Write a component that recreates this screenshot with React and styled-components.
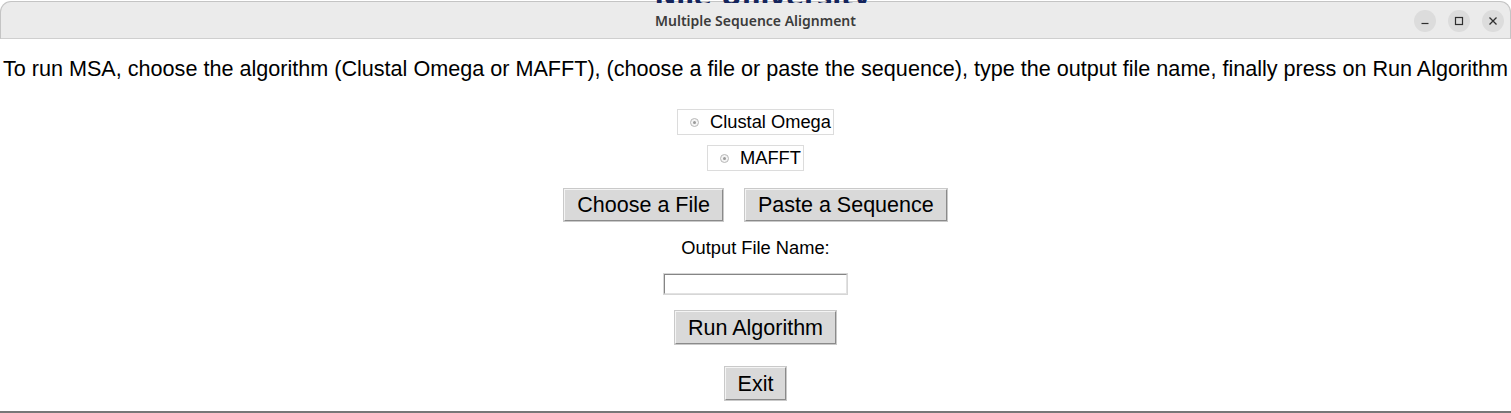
import React from "react";
import styled, { createGlobalStyle } from "styled-components";

const GlobalStyle = createGlobalStyle`
  html, body { margin: 0; padding: 0; background: #ffffff; }
  body { font-family: "Liberation Sans", Arial, sans-serif; }
  * { box-sizing: border-box; }
`;

const Screen = styled.div`
  position: relative;
  width: 1511px;
  height: 413px;
  overflow: hidden;
  background: #ffffff;
`;

const BehindText = styled.div`
  position: absolute;
  top: 0;
  left: 0;
  right: 0;
  height: 3px;
  overflow: hidden;
  display: flex;
  justify-content: center;
  align-items: flex-end;
  z-index: 2;
  pointer-events: none;
`;

const BehindLabel = styled.span`
  font-family: "DejaVu Sans", sans-serif;
  font-weight: 700;
  font-size: 26px;
  line-height: 26px;
  color: #14245c;
  margin-left: 14px;
  transform: translateY(7px);
  white-space: nowrap;
`;

const Window = styled.div`
  display: flex;
  flex-direction: column;
  width: 1511px;
  height: 413px;
  padding-top: 1px;
`;

const TitleBar = styled.div`
  display: grid;
  grid-template-columns: 1fr auto 1fr;
  align-items: center;
  height: 38px;
  background: #ebebeb;
  border: 1px solid #c4c4c4;
  border-bottom-color: #cfcfcf;
  border-radius: 11px 11px 0 0;
`;

const Title = styled.div`
  grid-column: 2;
  font-family: "Noto Sans", "DejaVu Sans", sans-serif;
  font-weight: 600;
  font-size: 14px;
  color: #3b3b3b;
`;

const Controls = styled.div`
  grid-column: 3;
  justify-self: end;
  display: flex;
  gap: 12px;
  padding-right: 6px;
  margin-top: 2px;
`;

const CtrlButton = styled.div`
  width: 22px;
  height: 22px;
  border-radius: 50%;
  background: #dcdcdc;
  display: flex;
  align-items: center;
  justify-content: center;
`;

const Content = styled.div`
  flex: 1;
  display: flex;
  flex-direction: column;
  align-items: center;
  border-bottom: 2px solid #777777;
  background: #ffffff;
`;

const Instructions = styled.div`
  margin-top: 18px;
  font-size: 21.6px;
  line-height: 24px;
  color: #000;
  white-space: nowrap;
`;

const RadioBox = styled.label`
  display: flex;
  align-items: center;
  height: 26px;
  margin-top: ${(p) => p.$mt}px;
  padding: 0 2px 0 ${(p) => p.$pl}px;
  border: 1px solid #dcdcdc;
  font-size: 18.3px;
  color: #000;
`;

const RadioDot = styled.span`
  width: 9px;
  height: 9px;
  border-radius: 50%;
  border: 1px solid #b8b8b8;
  background: #f4f4f4;
  display: flex;
  align-items: center;
  justify-content: center;
  margin-right: 11px;
  &::after {
    content: "";
    width: 3px;
    height: 3px;
    border-radius: 50%;
    background: #9a9a9a;
  }
`;

const ButtonRow = styled.div`
  display: flex;
  gap: 22px;
  margin-top: 18px;
`;

const TkButton = styled.button`
  height: ${(p) => p.$h || 32}px;
  padding: 0 12px;
  margin: ${(p) => p.$mt || 0}px 0 0;
  background: #d9d9d9;
  border: 1px solid;
  border-color: #f4f4f4 #8a8a8a #8a8a8a #f4f4f4;
  box-shadow: 0 0 0 1px #c9c9c9;
  font-family: "Liberation Sans", Arial, sans-serif;
  font-size: 21.5px;
  line-height: 24px;
  color: #000;
  cursor: pointer;
`;

const FieldLabel = styled.div`
  margin-top: 16px;
  font-size: 18.3px;
  line-height: 22px;
  color: #000;
`;

const Entry = styled.input`
  width: 183px;
  height: 20px;
  margin-top: 15px;
  border: 1px solid;
  border-color: #858585 #e2e2e2 #e2e2e2 #858585;
  box-shadow: 0 0 0 1px #d6d6d6;
  background: #fff;
  outline: none;
`;

export default function App() {
  return (
    <Screen>
      <GlobalStyle />
      <BehindText>
        <BehindLabel>Nile University</BehindLabel>
      </BehindText>
      <Window>
        <TitleBar>
          <Title>Multiple Sequence Alignment</Title>
          <Controls>
            <CtrlButton>
              <svg width="10" height="10" viewBox="0 0 10 10">
                <line x1="1.5" y1="7.5" x2="8.5" y2="7.5" stroke="#2e2e2e" strokeWidth="1.2" />
              </svg>
            </CtrlButton>
            <CtrlButton>
              <svg width="10" height="10" viewBox="0 0 10 10">
                <rect x="1.5" y="1.5" width="7" height="7" fill="none" stroke="#2e2e2e" strokeWidth="1.2" />
              </svg>
            </CtrlButton>
            <CtrlButton>
              <svg width="10" height="10" viewBox="0 0 10 10">
                <path d="M1.5 1.5 L8.5 8.5 M8.5 1.5 L1.5 8.5" stroke="#2e2e2e" strokeWidth="1.3" />
              </svg>
            </CtrlButton>
          </Controls>
        </TitleBar>
        <Content>
          <Instructions>
            To run MSA, choose the algorithm (Clustal Omega or MAFFT), (choose a file or paste the sequence), type the output file name, finally press on Run Algorithm
          </Instructions>
          <RadioBox $mt={28} $pl={12}>
            <RadioDot />
            Clustal Omega
          </RadioBox>
          <RadioBox $mt={10} $pl={12}>
            <RadioDot />
            MAFFT
          </RadioBox>
          <ButtonRow>
            <TkButton>Choose a File</TkButton>
            <TkButton>Paste a Sequence</TkButton>
          </ButtonRow>
          <FieldLabel>Output File Name:</FieldLabel>
          <Entry type="text" />
          <TkButton $mt={17} $h={33}>Run Algorithm</TkButton>
          <TkButton $mt={23} $h={33}>Exit</TkButton>
        </Content>
      </Window>
    </Screen>
  );
}
